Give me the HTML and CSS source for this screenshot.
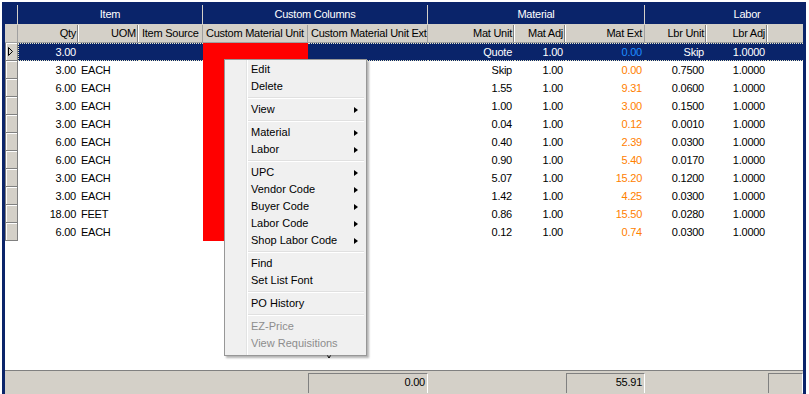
FILE: index.html
```html
<!DOCTYPE html>
<html lang="en">
<head>
    <meta charset="UTF-8">
    <title>Item List</title>
    <link rel="stylesheet" href="styles.css">
</head>
<body>
    <div class="frame">
        <div class="groups">
            <div></div>
            <div>Item</div>
            <div>Custom Columns</div>
            <div>Material</div>
            <div class="labor">Labor</div>
        </div>

        <div class="heads cols">
            <div class="sc"></div>
            <div class="r dv">Qty</div>
            <div class="r dv">UOM</div>
            <div class="l ln">Item Source</div>
            <div class="l ln">Custom Material Unit</div>
            <div class="l ln">Custom Material Unit Ext</div>
            <div class="r dv">Mat Unit</div>
            <div class="r dv">Mat Adj</div>
            <div class="r ln">Mat Ext</div>
            <div class="r dv">Lbr Unit</div>
            <div class="r dv">Lbr Adj</div>
            <div></div>
        </div>

        <div class="rows">
            <div class="row cols sel">
                <div class="sc"><svg width="5" height="9" viewBox="0 0 5 9"><path d="M0.5 0.5 L4.5 4.5 L0.5 8.5 Z" fill="none" stroke="#000" stroke-width="1"/></svg></div>
                <div class="r first">3.00</div><div class="l"></div><div></div>
                <div class="red"></div><div></div>
                <div class="r">Quote</div><div class="r">1.00</div><div class="r blue">0.00</div>
                <div class="r">Skip</div><div class="r">1.0000</div><div></div>
            </div>
            <div class="row cols">
                <div class="sc"></div>
                <div class="r">3.00</div><div class="l">EACH</div><div></div>
                <div class="red"></div><div></div>
                <div class="r">Skip</div><div class="r">1.00</div><div class="r ext">0.00</div>
                <div class="r">0.7500</div><div class="r">1.0000</div><div></div>
            </div>
            <div class="row cols">
                <div class="sc"></div>
                <div class="r">6.00</div><div class="l">EACH</div><div></div>
                <div class="red"></div><div></div>
                <div class="r">1.55</div><div class="r">1.00</div><div class="r ext">9.31</div>
                <div class="r">0.0600</div><div class="r">1.0000</div><div></div>
            </div>
            <div class="row cols">
                <div class="sc"></div>
                <div class="r">3.00</div><div class="l">EACH</div><div></div>
                <div class="red"></div><div></div>
                <div class="r">1.00</div><div class="r">1.00</div><div class="r ext">3.00</div>
                <div class="r">0.1500</div><div class="r">1.0000</div><div></div>
            </div>
            <div class="row cols">
                <div class="sc"></div>
                <div class="r">3.00</div><div class="l">EACH</div><div></div>
                <div class="red"></div><div></div>
                <div class="r">0.04</div><div class="r">1.00</div><div class="r ext">0.12</div>
                <div class="r">0.0010</div><div class="r">1.0000</div><div></div>
            </div>
            <div class="row cols">
                <div class="sc"></div>
                <div class="r">6.00</div><div class="l">EACH</div><div></div>
                <div class="red"></div><div></div>
                <div class="r">0.40</div><div class="r">1.00</div><div class="r ext">2.39</div>
                <div class="r">0.0300</div><div class="r">1.0000</div><div></div>
            </div>
            <div class="row cols">
                <div class="sc"></div>
                <div class="r">6.00</div><div class="l">EACH</div><div></div>
                <div class="red"></div><div></div>
                <div class="r">0.90</div><div class="r">1.00</div><div class="r ext">5.40</div>
                <div class="r">0.0170</div><div class="r">1.0000</div><div></div>
            </div>
            <div class="row cols">
                <div class="sc"></div>
                <div class="r">3.00</div><div class="l">EACH</div><div></div>
                <div class="red"></div><div></div>
                <div class="r">5.07</div><div class="r">1.00</div><div class="r ext">15.20</div>
                <div class="r">0.1200</div><div class="r">1.0000</div><div></div>
            </div>
            <div class="row cols">
                <div class="sc"></div>
                <div class="r">3.00</div><div class="l">EACH</div><div></div>
                <div class="red"></div><div></div>
                <div class="r">1.42</div><div class="r">1.00</div><div class="r ext">4.25</div>
                <div class="r">0.0300</div><div class="r">1.0000</div><div></div>
            </div>
            <div class="row cols">
                <div class="sc"></div>
                <div class="r">18.00</div><div class="l">FEET</div><div></div>
                <div class="red"></div><div></div>
                <div class="r">0.86</div><div class="r">1.00</div><div class="r ext">15.50</div>
                <div class="r">0.0280</div><div class="r">1.0000</div><div></div>
            </div>
            <div class="row cols">
                <div class="sc"></div>
                <div class="r">6.00</div><div class="l">EACH</div><div></div>
                <div class="red"></div><div></div>
                <div class="r">0.12</div><div class="r">1.00</div><div class="r ext">0.74</div>
                <div class="r">0.0300</div><div class="r">1.0000</div><div></div>
            </div>
        </div>

        <div class="status cols">
            <div></div><div></div><div></div><div></div><div></div>
            <div class="panel">0.00</div>
            <div></div><div></div>
            <div class="panel">55.91</div>
            <div></div><div></div>
            <div class="panel"></div>
        </div>

        <!-- context menu over the list -->
        <div class="menu">
            <div class="item">Edit</div>
            <div class="item">Delete</div>
            <div class="sep"></div>
            <div class="item">View <span class="arr"></span></div>
            <div class="sep"></div>
            <div class="item">Material <span class="arr"></span></div>
            <div class="item">Labor <span class="arr"></span></div>
            <div class="sep"></div>
            <div class="item">UPC <span class="arr"></span></div>
            <div class="item">Vendor Code <span class="arr"></span></div>
            <div class="item">Buyer Code <span class="arr"></span></div>
            <div class="item">Labor Code <span class="arr"></span></div>
            <div class="item">Shop Labor Code <span class="arr"></span></div>
            <div class="sep"></div>
            <div class="item">Find</div>
            <div class="item">Set List Font</div>
            <div class="sep"></div>
            <div class="item">PO History</div>
            <div class="sep"></div>
            <div class="item off">EZ-Price</div>
            <div class="item off">View Requisitions</div>
        </div>

        <svg class="mark" width="4" height="4" viewBox="0 0 4 4"><path d="M0.5 0.5 L2 3 L3.5 0.5" fill="none" stroke="#000" stroke-width="1"/></svg>
    </div>
</body>
</html>
```

FILE: styles.css
```css
body {
    margin: 0;
    background: #fff;
    overflow: hidden;
    font-family: "Liberation Sans", Arial, sans-serif;
    font-size: 11px;
    letter-spacing: -0.25px;
    color: #000;
}
.frame {
    position: relative;
    margin: 2px 0 0 2px;
    width: 798px;
    height: 395px;
    border: 3px solid #0a246a;
    border-bottom: none;
    display: flex;
    flex-direction: column;
    background: #fff;
}
.cols {
    display: grid;
    grid-template-columns: 13px 61px 60px 64px 105px 120px 87px 51px 79px 62px 61px 35px;
}
.groups {
    display: grid;
    grid-template-columns: 13px 185px 225px 217px 158px;
    background: #0a246a;
    color: #fff;
    height: 20px;
}
.groups div {
    border-right: 1px solid #d4d0c8;
    border-bottom: 1px solid #d4d0c8;
    line-height: 19px;
    text-align: center;
}
.groups .labor {
    border-right: none;
    padding-left: 46px;
}
.heads {
    height: 18px;
    background: #d4d0c8;
    border-bottom: 1px solid #a0a0a0;
    box-sizing: border-box;
}
.heads div {
    line-height: 17px;
    white-space: nowrap;
    overflow: hidden;
}
.heads .sc { border-right: 1px solid #a0a0a0; }
.heads .r { text-align: right; padding-right: 2px; }
.heads .l { padding-left: 3px; }
.heads .dv {
    border-right: 1px solid #fff;
    box-shadow: inset -1px 0 #808080;
}
.heads .ln { border-right: 1px solid #a0a0a0; }

.rows {
    flex: 1;
    background: #fff;
}
.row {
    height: 18px;
}
.row div {
    line-height: 18px;
    white-space: nowrap;
}
.row .r { text-align: right; padding-right: 3px; }
.row .l { padding-left: 2px; }
.row .sc {
    background: #d4d0c8;
    border-right: 1px solid #808080;
    border-bottom: 1px solid #808080;
    box-shadow: inset 1px 0 #808080, inset 2px 1px #fff;
    box-sizing: border-box;
}
.row .sc svg {
    display: block;
    margin: 4px 0 0 3px;
}
.row .red { background: #ff0000; }
.ext { color: #ff8000; }

.sel div:not(.sc):not(.red) {
    background: #0a246a;
    color: #fff;
    border-top: 1px dotted #e8e8c8;
    border-bottom: 1px dotted #e8e8c8;
    line-height: 16px;
}
.sel .first { border-left: 1px dotted #e8e8c8; }
.sel div.blue:not(.sc):not(.red) { color: #1e8cff; }

.status {
    height: 30px;
    background: #d4d0c8;
    border-top: 1px solid #808080;
    padding-top: 2px;
    box-sizing: border-box;
}
.panel {
    height: 19px;
    border-top: 1px solid #808080;
    border-left: 1px solid #808080;
    border-right: 1px solid #fff;
    text-align: right;
    padding-right: 2px;
    line-height: 17px;
}

.menu {
    position: absolute;
    left: 219px;
    top: 54px;
    width: 141px;
    padding: 1px 0 3px;
    border: 1px solid #979797;
    background: linear-gradient(90deg, transparent 21px, #e2e3e3 21px, #e2e3e3 22px, #fff 22px, #fff 23px, transparent 23px), #f0f0f0;
    box-shadow: 2px 2px 2px rgba(0, 0, 0, 0.3);
    font-family: "Liberation Sans Narrow", "Liberation Sans", Arial, sans-serif;
    font-size: 11px;
    letter-spacing: 0;
}
.item {
    height: 17px;
    line-height: 17px;
    padding: 0 8px 0 26px;
    display: flex;
    justify-content: space-between;
    align-items: center;
}
.item.off { color: #8d8d8d; }
.arr {
    width: 0;
    height: 0;
    border-left: 4px solid #000;
    border-top: 3.5px solid transparent;
    border-bottom: 3.5px solid transparent;
}
.sep {
    height: 1px;
    margin: 2px 2px 2px 23px;
    background: #e0e0e0;
    border-bottom: 1px solid #fff;
}
.mark {
    position: absolute;
    left: 322px;
    top: 350px;
}
```
